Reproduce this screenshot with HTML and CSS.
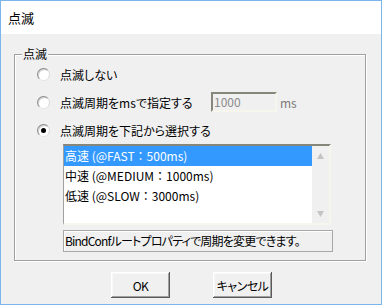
FILE: index.html
```html
<!DOCTYPE html>
<html lang="ja">
<head>
<meta charset="utf-8">
<link rel="stylesheet" href="styles.css">
</head>
<body>
<div class="window">
  <div class="titlebar">点滅</div>
  <div class="content">
    <div class="group">
      <span class="legend">点滅</span>
      <div class="row">
        <span class="radio"></span>
        <span class="label">点滅しない</span>
      </div>
      <div class="row">
        <span class="radio"></span>
        <span class="label fixed">点滅周期をmsで指定する</span>
        <span class="textbox">1000</span>
        <span class="unit">ms</span>
      </div>
      <div class="row">
        <span class="radio checked"></span>
        <span class="label">点滅周期を下記から選択する</span>
      </div>
      <div class="listbox">
        <div class="items">
          <div class="item selected">高速 (@FAST：500ms)</div>
          <div class="item">中速 (@MEDIUM：1000ms)</div>
          <div class="item">低速 (@SLOW：3000ms)</div>
        </div>
        <div class="scrollbar">
          <svg class="arrow" width="9" height="8" viewBox="0 0 9 8"><polygon points="4.5,1 8,7 1,7" fill="#c4c4c4"/></svg>
          <svg class="arrow" width="9" height="8" viewBox="0 0 9 8"><polygon points="1,1 8,1 4.5,7" fill="#c4c4c4"/></svg>
        </div>
      </div>
      <div class="info">BindConfルートプロパティで周期を変更できます。</div>
    </div>
    <div class="buttons">
      <div class="button">OK</div>
      <div class="button">キャンセル</div>
    </div>
  </div>
</div>
</body>
</html>
```

FILE: styles.css
```css
html, body {
  margin: 0;
  padding: 0;
  background: #f0f0f0;
}
body {
  font-family: "Noto Sans CJK JP", "Noto Sans", sans-serif;
  font-size: 12px;
  color: #000;
}
.window {
  width: 382px;
  height: 305px;
  box-sizing: border-box;
  border: 1px solid #7cb4ec;
  background: #f0f0f0;
  display: flex;
  flex-direction: column;
}
.titlebar {
  height: 33px;
  line-height: 33px;
  background: #fff;
  padding-left: 7px;
  font-size: 13px;
}
.content {
  flex: 1;
  display: flex;
  flex-direction: column;
}
.group {
  position: relative;
  margin: 20px 0 0 13px;
  width: 352px;
  box-sizing: border-box;
  border: 1px solid #a0a0a0;
  box-shadow: inset 1px 1px 0 #fff, 1px 1px 0 #fff;
  padding: 5px 0 8px 22px;
}
.legend {
  position: absolute;
  left: 7px;
  top: -9px;
  padding: 0 1px;
  line-height: 16px;
  background: #f0f0f0;
}
.row {
  height: 28px;
  display: flex;
  align-items: center;
}
.radio {
  width: 13px;
  height: 13px;
  box-sizing: border-box;
  border-radius: 50%;
  border: 1px solid;
  border-color: #8c8c8c #d8d8d8 #e4e4e4 #8c8c8c;
  background: #fff;
  box-shadow: inset 1px 1px 0 #cfcfcf;
  display: flex;
  align-items: center;
  justify-content: center;
  flex: none;
}
.radio.checked::after {
  content: "";
  width: 5px;
  height: 5px;
  border-radius: 50%;
  background: #000;
}
.label {
  margin-left: 10px;
  font-feature-settings: "palt";
}
.label.fixed {
  width: 151px;
}
.textbox {
  width: 66px;
  height: 20px;
  box-sizing: border-box;
  border-style: solid;
  border-width: 2px;
  border-color: #86867a #f6f6ec #f6f6ec #86867a;
  background: #f0f0f0;
  color: #8c8c8c;
  padding-left: 1px;
  line-height: 16px;
}
.unit {
  margin-left: 3px;
  color: #7a7a7a;
}
.listbox {
  margin-left: 26px;
  width: 268px;
  height: 81px;
  box-sizing: border-box;
  border-style: solid;
  border-width: 2px 2px 2px 1px;
  border-color: #86867a #f6f6ec #f6f6ec #a0a0a0;
  background: #fff;
  display: flex;
}
.items {
  flex: 1;
}
.item {
  height: 20px;
  line-height: 20px;
  padding-left: 1px;
}
.item.selected {
  background: #3399ff;
  color: #fff;
}
.scrollbar {
  width: 17px;
  background: #f0f0f0;
  display: flex;
  flex-direction: column;
  justify-content: space-between;
  align-items: center;
  padding: 6px 0 5px;
}
.arrow {
  display: block;
}
.info {
  margin: 5px 0 0 26px;
  width: 270px;
  height: 22px;
  box-sizing: border-box;
  border: 1px solid #a8a8a8;
  box-shadow: inset 1px 1px 0 #fff;
  line-height: 20px;
  padding-left: 1px;
  white-space: nowrap;
  overflow: hidden;
  font-feature-settings: "palt";
  letter-spacing: -0.8px;
}
.buttons {
  display: flex;
  gap: 43px;
  margin: 11px 0 0 110px;
}
.button {
  width: 59px;
  height: 26px;
  box-sizing: border-box;
  background: #f0f0f0;
  box-shadow: inset -1px -1px 0 #5a5a5a, inset 1px 1px 0 #fff, inset -2px -2px 0 #a0a0a0, inset 2px 2px 0 #f8f8f8;
  display: flex;
  align-items: center;
  justify-content: center;
  white-space: nowrap;
  font-feature-settings: "palt";
  letter-spacing: -0.5px;
}
```
